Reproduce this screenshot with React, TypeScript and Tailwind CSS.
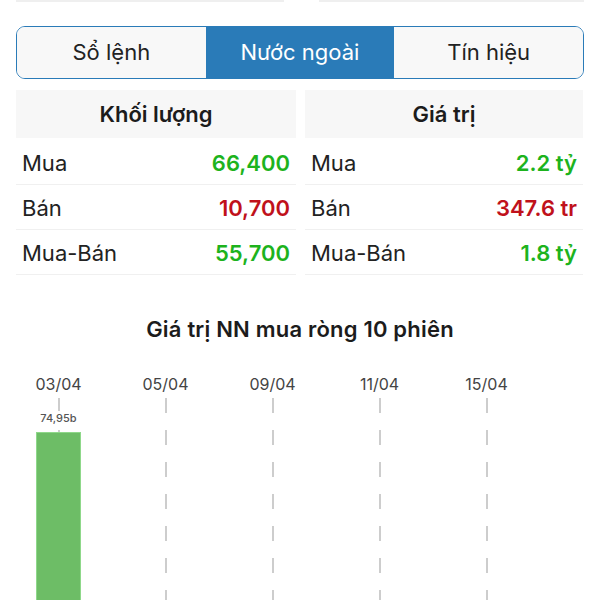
import React from 'react';

const font = { fontFamily: 'Inter, "Noto Sans", sans-serif' };

type Row = { label: string; value: string; tone: 'up' | 'down' };

const volumeRows: Row[] = [
  { label: 'Mua', value: '66,400', tone: 'up' },
  { label: 'Bán', value: '10,700', tone: 'down' },
  { label: 'Mua-Bán', value: '55,700', tone: 'up' },
];

const valueRows: Row[] = [
  { label: 'Mua', value: '2.2 tỷ', tone: 'up' },
  { label: 'Bán', value: '347.6 tr', tone: 'down' },
  { label: 'Mua-Bán', value: '1.8 tỷ', tone: 'up' },
];

const dates = ['03/04', '05/04', '09/04', '11/04', '15/04'];

function StatColumn({ title, rows }: { title: string; rows: Row[] }) {
  return (
    <div className="flex flex-col">
      <div className="h-[48px] bg-[#f7f7f7] flex items-center justify-center text-[22px] font-semibold text-[#1c1c1c]">
        {title}
      </div>
      {rows.map((r, i) => (
        <div
          key={r.label}
          className={`${i === 0 ? 'h-[47px] pt-[4px]' : 'h-[45px] pt-[2px]'} flex items-center justify-between px-[6px] border-b border-[#f0f0f0]`}
        >
          <span className="text-[22px] text-[#222]">{r.label}</span>
          <span className={`text-[22px] font-semibold ${r.tone === 'up' ? 'text-[#1db31d]' : 'text-[#c0111b]'}`}>{r.value}</span>
        </div>
      ))}
    </div>
  );
}

function DashLine() {
  return (
    <svg className="absolute left-1/2 top-0 -translate-x-1/2" width="4" height="210">
      <line x1="2" y1="0" x2="2" y2="210" stroke="#bdbdbd" strokeWidth="1.5" strokeDasharray="15 17" />
    </svg>
  );
}

export default function App() {
  const tabs = ['Sổ lệnh', 'Nước ngoài', 'Tín hiệu'];
  return (
    <div className="w-[600px] bg-white overflow-hidden" style={font}>
      <div className="px-4">
        <div className="flex justify-between">
          <div className="h-[2px] w-[268px] bg-[#efefef]" />
          <div className="h-[2px] w-[265px] bg-[#efefef]" />
        </div>

        <div className="mt-[24px] h-[53px] grid grid-cols-3 border-[1.5px] border-[#2a7bb8] rounded-[9px] overflow-hidden">
          {tabs.map((t, i) => (
            <div
              key={t}
              className={`flex items-center justify-center text-[22px] ${i === 1 ? 'bg-[#2a7bb8] text-white' : 'bg-[#f8f8f8] text-[#222]'}`}
            >
              {t}
            </div>
          ))}
        </div>

        <div className="mt-[11px] grid grid-cols-[280px_278px] gap-[9px]">
          <StatColumn title="Khối lượng" rows={volumeRows} />
          <StatColumn title="Giá trị" rows={valueRows} />
        </div>

        <div className="mt-[40px] h-[28px] flex items-center justify-center text-[22px] font-semibold text-[#1c1c1c] tracking-[0.2px]">
          Giá trị NN mua ròng 10 phiên
        </div>
      </div>

      <div className="mt-[31px] flex pl-[5px]">
        {dates.map((d, i) => (
          <div key={d} className="w-[107px] flex flex-col items-center">
            <div className="h-[20px] leading-[20px] text-[16px] text-[#444]">{d}</div>
            <div className="relative mt-[4px] h-[210px] w-full flex flex-col items-center">
              <DashLine />
              {i === 0 && (
                <>
                  <div className="relative mt-[13px] h-[14px] leading-[14px] text-[11px] font-medium text-[#555] bg-white px-[1px]">74,95b</div>
                  <div className="relative mt-[7px] w-[45px] flex-1 bg-[#6dbd66] border border-[#8fd88a]" />
                </>
              )}
            </div>
          </div>
        ))}
      </div>
    </div>
  );
}
